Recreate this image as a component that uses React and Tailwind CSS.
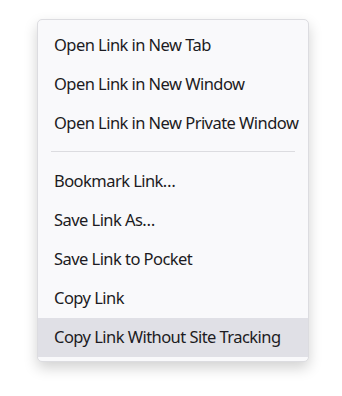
import React from "react";

const groups = [
  ["Open Link in New Tab", "Open Link in New Window", "Open Link in New Private Window"],
  ["Bookmark Link…", "Save Link As…", "Save Link to Pocket", "Copy Link", "Copy Link Without Site Tracking"],
];

const MenuItem = ({ label, active }) => (
  <div
    className={`h-[39px] flex items-center pl-[16px] whitespace-nowrap text-[16.5px] tracking-[-0.55px] text-[#1c1b22] ${
      active ? "bg-[#e0e0e6]" : ""
    }`}
  >
    {label}
  </div>
);

const App = () => {
  return (
    <div
      className="w-[342px] h-[396px] bg-white pt-[19px] pl-[37px]"
      style={{ fontFamily: '"Noto Sans", "Open Sans", sans-serif' }}
    >
      <div className="w-[272px] bg-[#f9f9fb] border border-[#dcdce0] rounded-[5px] shadow-[0_6px_14px_rgba(0,0,0,0.18)] pt-[6px] pb-[4px]">
        {groups[0].map((label) => (
          <MenuItem key={label} label={label} />
        ))}
        {/* separator */}
        <div className="mx-[13px] mt-[8px] mb-[10px] h-px bg-[#dcdce0]" />
        {groups[1].map((label, i) => (
          <MenuItem key={label} label={label} active={i === groups[1].length - 1} />
        ))}
      </div>
    </div>
  );
};

export default App;
